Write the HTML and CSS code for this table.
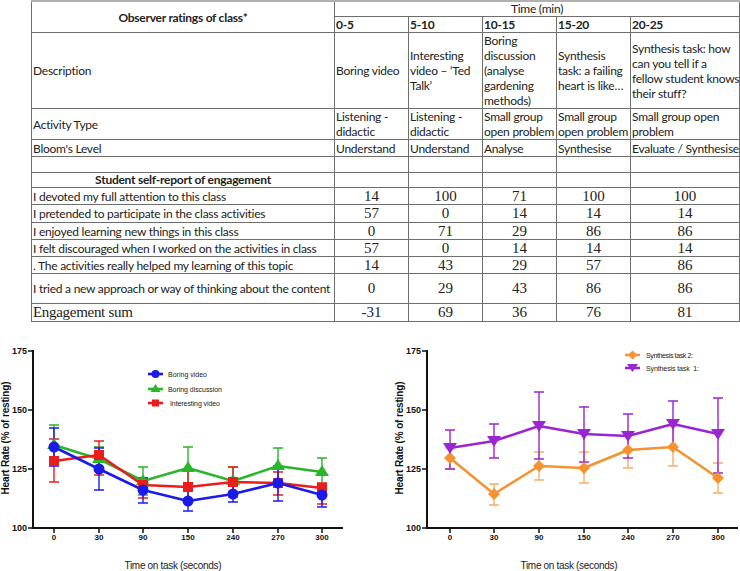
FILE: index.html
```html
<!DOCTYPE html>
<html>
<head>
<meta charset="utf-8">
<link rel="stylesheet" href="styles.css">
</head>
<body>
<table class="obs">
  <colgroup>
    <col class="c-label"><col class="c-t"><col class="c-t"><col class="c-t"><col class="c-t"><col class="c-last">
  </colgroup>
  <tr class="r-h1">
    <th rowspan="2" class="title">Observer ratings of class*</th>
    <td colspan="5" class="time">Time (min)</td>
  </tr>
  <tr class="r-h2">
    <th class="per">0-5</th><th class="per">5-10</th><th class="per">10-15</th><th class="per">15-20</th><th class="per">20-25</th>
  </tr>
  <tr class="r-desc">
    <td>Description</td>
    <td>Boring video</td>
    <td>Interesting<br>video – ‘Ted<br>Talk’</td>
    <td>Boring<br>discussion<br>(analyse<br>gardening<br>methods)</td>
    <td>Synthesis<br>task: a failing<br>heart is like…</td>
    <td>Synthesis task: how<br>can you tell if a<br>fellow student knows<br>their stuff?</td>
  </tr>
  <tr class="r-act">
    <td>Activity Type</td>
    <td>Listening -<br>didactic</td>
    <td>Listening -<br>didactic</td>
    <td>Small group<br>open problem</td>
    <td>Small group<br>open problem</td>
    <td>Small group open<br>problem</td>
  </tr>
  <tr class="r-s">
    <td>Bloom's Level</td><td>Understand</td><td>Understand</td><td>Analyse</td><td>Synthesise</td><td>Evaluate / Synthesise</td>
  </tr>
  <tr class="r-e">
    <td></td><td></td><td></td><td></td><td></td><td></td>
  </tr>
  <tr class="r-e2">
    <th class="title">Student self-report of engagement</th><td></td><td></td><td></td><td></td><td></td>
  </tr>
  <tr class="r-n">
    <td>I devoted my full attention to this class</td><td class="num">14</td><td class="num">100</td><td class="num">71</td><td class="num">100</td><td class="num">100</td>
  </tr>
  <tr class="r-n2">
    <td>I pretended to participate in the class activities</td><td class="num">57</td><td class="num">0</td><td class="num">14</td><td class="num">14</td><td class="num">14</td>
  </tr>
  <tr class="r-n">
    <td>I enjoyed learning new things in this class</td><td class="num">0</td><td class="num">71</td><td class="num">29</td><td class="num">86</td><td class="num">86</td>
  </tr>
  <tr class="r-n">
    <td>I felt discouraged when I worked on the activities in class</td><td class="num">57</td><td class="num">0</td><td class="num">14</td><td class="num">14</td><td class="num">14</td>
  </tr>
  <tr class="r-n">
    <td>. The activities really helped my learning of this topic</td><td class="num">14</td><td class="num">43</td><td class="num">29</td><td class="num">57</td><td class="num">86</td>
  </tr>
  <tr class="r-tall">
    <td>I tried a new approach or way of thinking about the content</td><td class="num">0</td><td class="num">29</td><td class="num">43</td><td class="num">86</td><td class="num">86</td>
  </tr>
  <tr class="r-sum">
    <td class="sum">Engagement sum</td><td class="num">-31</td><td class="num">69</td><td class="num">36</td><td class="num">76</td><td class="num">81</td>
  </tr>
</table>

<div class="charts">
  <svg class="chart" width="370" height="245" viewBox="0 326 370 245">
    <g class="axis">
      <path d="M33 349 V528 M32 527 H343"/>
      <path class="tick" d="M28 350 H33 M28 409 H33 M28 468 H33 M28 527 H33 M54 527 V532 M99 527 V532 M143 527 V532 M188 527 V532 M233 527 V532 M278 527 V532 M322 527 V532"/>
    </g>
    <g class="ylab">
      <text x="27" y="353">175</text><text x="27" y="412">150</text><text x="27" y="471">125</text><text x="27" y="530">100</text>
    </g>
    <g class="xlab">
      <text x="54" y="539">0</text><text x="99" y="539">30</text><text x="143" y="539">90</text><text x="188" y="539">150</text><text x="233" y="539">240</text><text x="278" y="539">270</text><text x="322" y="539">300</text>
    </g>
    <text class="ytitle" transform="translate(9 437) rotate(-90)" textLength="113">Heart Rate (% of resting)</text>
    <text class="xtitle" x="173" y="568" textLength="97">Time on task (seconds)</text>

    <path class="err green" d="M54 424V462M49 424H59M49 462H59 M99 446V470M94 446H104M94 470H104 M143 466V494M138 466H148M138 494H148 M188 446V488M183 446H193M183 488H193 M233 466V494M228 466H238M228 494H238 M278 447V484M273 447H283M273 484H283 M322 457V485M317 457H327M317 485H327"/>
    <path class="err red" d="M54 438V481M49 438H59M49 481H59 M99 440V474M94 440H104M94 474H104 M143 477V497M138 477H148M138 497H148 M188 470V500M183 470H193M183 500H193 M233 466V496M228 466H238M228 496H238 M278 471V494M273 471H283M273 494H283 M322 482V503M317 482H327M317 503H327"/>
    <path class="err blue" d="M54 427V465M49 427H59M49 465H59 M99 447V489M94 447H104M94 489H104 M143 477V502M138 477H148M138 502H148 M188 490V510M183 490H193M183 510H193 M233 485V501M228 485H238M228 501H238 M278 465V500M273 465H283M273 500H283 M322 487V506M317 487H327M317 506H327"/>

    <polyline class="ln green" points="54,444 99,458 143,480 188,467 233,480 278,465 322,471"/>
    <polyline class="ln red" points="54,460 99,454 143,484 188,486 233,481 278,482 322,487"/>
    <polyline class="ln blue" points="54,446 99,468 143,489 188,500 233,493 278,482 322,494"/>

    <g class="mk-green">
      <polygon points="54,437 47,448 61,448"/><polygon points="99,451 92,462 106,462"/><polygon points="143,473 136,484 150,484"/><polygon points="188,460 181,471 195,471"/><polygon points="233,473 226,484 240,484"/><polygon points="278,458 271,469 285,469"/><polygon points="322,464 315,475 329,475"/>
    </g>
    <g class="mk-red">
      <rect x="49" y="455" width="10" height="10"/><rect x="94" y="449" width="10" height="10"/><rect x="138" y="479" width="10" height="10"/><rect x="183" y="481" width="10" height="10"/><rect x="228" y="476" width="10" height="10"/><rect x="273" y="477" width="10" height="10"/><rect x="317" y="482" width="10" height="10"/>
    </g>
    <g class="mk-blue">
      <circle cx="54" cy="446" r="5.5"/><circle cx="99" cy="468" r="5.5"/><circle cx="143" cy="489" r="5.5"/><circle cx="188" cy="500" r="5.5"/><circle cx="233" cy="493" r="5.5"/><circle cx="278" cy="482" r="5.5"/><circle cx="322" cy="494" r="5.5"/>
    </g>

    <g class="legend">
      <path class="ln blue" d="M148 373 H163"/><circle class="mk-blue" cx="155.5" cy="373" r="4"/>
      <text x="168" y="375.5" textLength="39">Boring video</text>
      <path class="ln green" d="M148 388 H163"/><polygon class="mk-green" points="155.5,383 150.5,391 160.5,391"/>
      <text x="168" y="390.5" textLength="54">Boring discussion</text>
      <path class="ln red" d="M148 402 H163"/><rect class="mk-red" x="152" y="398.5" width="7" height="7"/>
      <text x="170" y="404.5" textLength="50">Interesting video</text>
    </g>
  </svg>

  <svg class="chart" width="370" height="245" viewBox="370 326 370 245">
    <g class="axis">
      <path d="M427 349 V528 M426 527 H738"/>
      <path class="tick" d="M422 350 H427 M422 409 H427 M422 468 H427 M422 527 H427 M450 527 V532 M494 527 V532 M539 527 V532 M584 527 V532 M628 527 V532 M673 527 V532 M718 527 V532"/>
    </g>
    <g class="ylab">
      <text x="421" y="353">175</text><text x="421" y="412">150</text><text x="421" y="471">125</text><text x="421" y="530">100</text>
    </g>
    <g class="xlab">
      <text x="450" y="539">0</text><text x="494" y="539">30</text><text x="539" y="539">90</text><text x="584" y="539">150</text><text x="628" y="539">240</text><text x="673" y="539">270</text><text x="718" y="539">300</text>
    </g>
    <text class="ytitle" transform="translate(403 437) rotate(-90)" textLength="113">Heart Rate (% of resting)</text>
    <text class="xtitle" x="569" y="568" textLength="97">Time on task (seconds)</text>

    <path class="err orange" d="M450 447V468M445 447H455M445 468H455 M494 483V504M489 483H499M489 504H499 M539 451V479M534 451H544M534 479H544 M584 451V482M579 451H589M579 482H589 M628 433V467M623 433H633M623 467H633 M673 425V465M668 425H678M668 465H678 M718 462V492M713 462H723M713 492H723"/>
    <path class="err purple" d="M450 429V468M445 429H455M445 468H455 M494 423V457M489 423H499M489 457H499 M539 391V458M534 391H544M534 458H544 M584 406V461M579 406H589M579 461H589 M628 413V457M623 413H633M623 457H633 M673 400V446M668 400H678M668 446H678 M718 397V472M713 397H723M713 472H723"/>

    <polyline class="ln orange" points="450,457 494,493 539,465 584,467 628,449 673,446 718,477"/>
    <polyline class="ln purple" points="450,447 494,440 539,425 584,433 628,435 673,423 718,433"/>

    <g class="mk-orange">
      <polygon points="450,451 456,457 450,463 444,457"/><polygon points="494,487 500,493 494,499 488,493"/><polygon points="539,459 545,465 539,471 533,465"/><polygon points="584,461 590,467 584,473 578,467"/><polygon points="628,443 634,449 628,455 622,449"/><polygon points="673,440 679,446 673,452 667,446"/><polygon points="718,471 724,477 718,483 712,477"/>
    </g>
    <g class="mk-purple">
      <polygon points="443,442 457,442 450,453"/><polygon points="487,435 501,435 494,446"/><polygon points="532,420 546,420 539,431"/><polygon points="577,428 591,428 584,439"/><polygon points="621,430 635,430 628,441"/><polygon points="666,418 680,418 673,429"/><polygon points="711,428 725,428 718,439"/>
    </g>

    <g class="legend">
      <path class="ln orange" d="M625 354 H640"/><polygon class="mk-orange" points="632.5,349.5 637,354 632.5,358.5 628,354"/>
      <text x="646" y="356.5" textLength="47">Synthesis task 2:</text>
      <path class="ln purple" d="M625 367 H640"/><polygon class="mk-purple" points="627,363 638,363 632.5,371"/>
      <text x="646" y="369.5" textLength="53" xml:space="preserve">Synthesis task  1:</text>
    </g>
  </svg>
</div>
</body>
</html>
```

FILE: styles.css
```css
html, body {
  margin: 0;
  padding: 0;
  background: #ffffff;
}

body {
  width: 740px;
  height: 571px;
  overflow: hidden;
  font-family: "Lato", "Liberation Sans", sans-serif;
  color: #222222;
}

.obs {
  margin-left: 31px;
  border-collapse: collapse;
  table-layout: fixed;
  width: 708px;
  border-top: 2px solid #b0b0b0;
  font-size: 12px;
  line-height: 15px;
  letter-spacing: -0.25px;
}

.c-label { width: 303px; }
.c-t { width: 74px; }
.c-last { width: 109px; }

.obs td, .obs th {
  border: 1px solid #6e6e6e;
  padding: 0 1px;
  text-align: left;
  vertical-align: middle;
  white-space: nowrap;
  overflow: visible;
  font-weight: normal;
}

.obs th.title {
  font-weight: bold;
  text-align: center;
}

.obs th.per {
  font-weight: bold;
}

.obs td.time {
  text-align: center;
}

.r-h1 td { height: 14px; line-height: 14px; }
.r-h2 th { height: 15px; line-height: 15px; }
.r-desc td { height: 74px; }
.r-act td { height: 30px; }
.r-s td { height: 16px; }
.r-e td { height: 15px; }
.r-e2 td, .r-e2 th { height: 14px; line-height: 14px; }
.r-n td { height: 16px; }
.r-n2 td { height: 17px; }
.r-tall td { height: 29px; }
.r-sum td { height: 17px; }

.obs td.num {
  text-align: center;
  font-family: "Liberation Serif", serif;
  font-size: 15px;
  letter-spacing: 0;
}

.obs td.sum {
  font-family: "Liberation Serif", serif;
  font-size: 15px;
  letter-spacing: -0.3px;
}

.charts {
  display: flex;
  margin-top: 5px;
}

.chart {
  display: block;
  flex: none;
  font-family: "Liberation Sans", Arial, sans-serif;
}

.axis path {
  fill: none;
  stroke: #111111;
  stroke-width: 2;
}

.axis path.tick {
  stroke-width: 1.5;
}

.ylab text {
  font-size: 9px;
  font-weight: bold;
  text-anchor: end;
  fill: #111111;
}

.xlab text {
  font-size: 8px;
  font-weight: bold;
  text-anchor: middle;
  fill: #111111;
}

.ytitle {
  font-size: 10px;
  font-weight: bold;
  text-anchor: middle;
  fill: #111111;
}

.xtitle {
  font-size: 10px;
  text-anchor: middle;
  fill: #222222;
}

.legend text {
  font-size: 7px;
  fill: #222222;
}

.err {
  fill: none;
  stroke-width: 1.4;
}

.ln {
  fill: none;
  stroke-width: 2.6;
  stroke-linejoin: round;
}

.blue { stroke: #1b1be8; }
.green { stroke: #2ab52a; }
.red { stroke: #ec1c1c; }
.orange { stroke: #f59332; }
.purple { stroke: #9a26d2; }

.err.orange { stroke: #f7ad66; }

.mk-blue { fill: #1b1be8; }
.mk-green { fill: #2ab52a; }
.mk-red { fill: #ec1c1c; }
.mk-orange { fill: #f59332; }
.mk-purple { fill: #9a26d2; }
```
